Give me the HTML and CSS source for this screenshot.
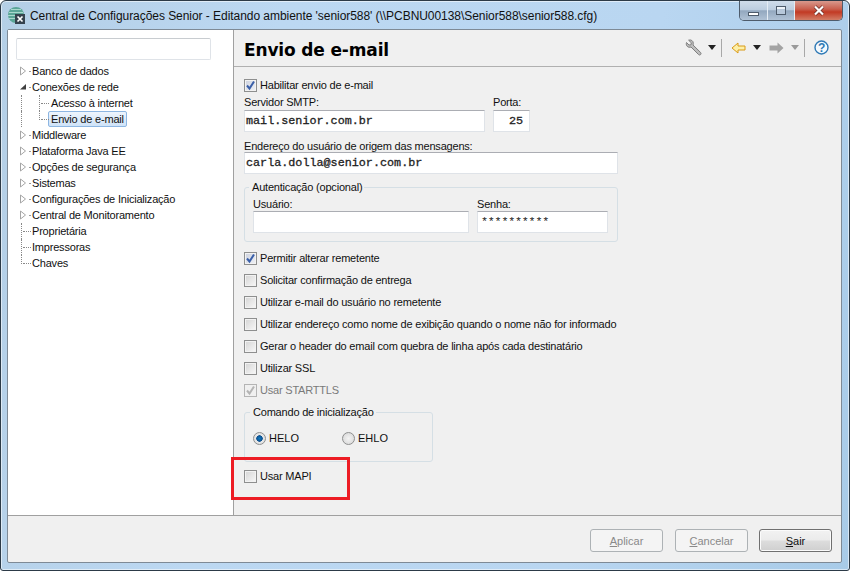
FILE: index.html
```html
<!DOCTYPE html>
<html lang="pt">
<head>
<meta charset="utf-8">
<title>Central de Configurações Senior</title>
<link rel="stylesheet" href="styles.css">
</head>
<body>
<div class="window">
  <header class="titlebar">
    <svg class="appicon" width="18" height="18" viewBox="0 0 18 18">
      <circle cx="8" cy="8" r="8" fill="#5aa596"/>
      <path d="M1 5.500h14M0 8.500h16M1 11.500h12M3 2.500h10" stroke="#a8d8cc" stroke-width="1"/>
      <rect x="7" y="7" width="10" height="10" fill="#35424d"/>
      <path d="M9.500 9.500l5 5M14.500 9.500l-5 5" stroke="#fff" stroke-width="1.700"/>
    </svg>
    <span class="title">Central de Configurações Senior - Editando ambiente 'senior588' (\\PCBNU00138\Senior588\senior588.cfg)</span>
    <div class="winbtns">
      <div class="winbtn min"><span class="minbar"></span></div>
      <div class="winbtn max"><span class="maxbox"></span></div>
      <div class="winbtn close">
        <svg width="14" height="11" viewBox="0 0 14 11"><path d="M3 1.500l8 8M11 1.500l-8 8" stroke="#6b2a22" stroke-width="3.600"/><path d="M3 1.500l8 8M11 1.500l-8 8" stroke="#fff" stroke-width="2.200"/></svg>
      </div>
    </div>
  </header>

  <div class="client">
    <div class="panes">
      <aside class="sidebar">
        <div class="search"></div>
        <ul class="tree">
          <li class="node"><svg class="arrow" width="8" height="10" viewBox="0 0 8 10"><path d="M1.500 1l5 4-5 4z" fill="#fff" stroke="#a6a6a6"/></svg><span class="dot"></span><span>Banco de dados</span></li>
          <li class="node"><svg class="arrow" width="8" height="10" viewBox="0 0 8 10"><path d="M1 7.500L7 2v5.500z" fill="#404040"/></svg><span class="dot"></span><span>Conexões de rede</span></li>
          <li class="node child"><span class="conn"></span><span>Acesso à internet</span></li>
          <li class="node child last"><span class="conn"></span><span class="selected">Envio de e-mail</span></li>
          <li class="node"><svg class="arrow" width="8" height="10" viewBox="0 0 8 10"><path d="M1.500 1l5 4-5 4z" fill="#fff" stroke="#a6a6a6"/></svg><span class="dot"></span><span>Middleware</span></li>
          <li class="node"><svg class="arrow" width="8" height="10" viewBox="0 0 8 10"><path d="M1.500 1l5 4-5 4z" fill="#fff" stroke="#a6a6a6"/></svg><span class="dot"></span><span>Plataforma Java EE</span></li>
          <li class="node"><svg class="arrow" width="8" height="10" viewBox="0 0 8 10"><path d="M1.500 1l5 4-5 4z" fill="#fff" stroke="#a6a6a6"/></svg><span class="dot"></span><span>Opções de segurança</span></li>
          <li class="node"><svg class="arrow" width="8" height="10" viewBox="0 0 8 10"><path d="M1.500 1l5 4-5 4z" fill="#fff" stroke="#a6a6a6"/></svg><span class="dot"></span><span>Sistemas</span></li>
          <li class="node"><svg class="arrow" width="8" height="10" viewBox="0 0 8 10"><path d="M1.500 1l5 4-5 4z" fill="#fff" stroke="#a6a6a6"/></svg><span class="dot"></span><span>Configurações de Inicialização</span></li>
          <li class="node"><svg class="arrow" width="8" height="10" viewBox="0 0 8 10"><path d="M1.500 1l5 4-5 4z" fill="#fff" stroke="#a6a6a6"/></svg><span class="dot"></span><span>Central de Monitoramento</span></li>
          <li class="node leaf"><span class="conn"></span><span>Proprietária</span></li>
          <li class="node leaf"><span class="conn"></span><span>Impressoras</span></li>
          <li class="node leaf last"><span class="conn"></span><span>Chaves</span></li>
        </ul>
      </aside>

      <main class="content">
        <div class="pagehead">
          <h1>Envio de e-mail</h1>
          <div class="tools">
            <svg class="wrench" width="17" height="17" viewBox="0 0 17 17"><path d="M1.500 3.500L4 6l2-.2.3-2L3.600 1.200C6 .3 8.400 1.800 8.300 4.400c0 .7-.1 1.100-.3 1.600l7.700 7.600c1.200 1.400-.8 3.300-2.100 2L6 8c-2.800 1-5.500-1-4.500-4.500z" fill="#bdbdbd" stroke="#7f7f7f"/></svg>
            <span class="caret"></span>
            <span class="sep"></span>
            <svg class="back" width="15" height="12" viewBox="0 0 15 12"><path d="M1 6l6-5v3h7v4H7v3z" fill="#fdf0a8" stroke="#d99a17"/></svg>
            <span class="caret"></span>
            <svg class="fwd" width="15" height="12" viewBox="0 0 15 12"><path d="M14.500 6L8.500.5v3H.5v5h8v3z" fill="#a3a3a3"/></svg>
            <span class="caret dim"></span>
            <span class="sep"></span>
            <svg class="help" width="15" height="15" viewBox="0 0 15 15"><circle cx="7.500" cy="7.500" r="6.500" fill="#f4f9fd" stroke="#2f79b5" stroke-width="1.400"/><text x="7.500" y="11.500" class="qmark" text-anchor="middle">?</text></svg>
          </div>
        </div>

        <form class="form">
          <label class="check first"><span class="box checked"><svg width="11" height="11" viewBox="0 0 11 11"><path d="M2 5.500l2.500 3L9 1.500" fill="none" stroke="#3a5fa8" stroke-width="2"/></svg></span>Habilitar envio de e-mail</label>
          <div class="fieldrow smtp">
            <div class="field"><span class="lbl">Servidor SMTP:</span><div class="input mono w241">mail.senior.com.br</div></div>
            <div class="field"><span class="lbl">Porta:</span><div class="input mono w37 right">25</div></div>
          </div>
          <div class="field origem"><span class="lbl">Endereço do usuário de origem das mensagens:</span><div class="input mono w374">carla.dolla@senior.com.br</div></div>

          <fieldset class="group auth">
            <legend>Autenticação (opcional)</legend>
            <div class="fieldrow authrow">
              <div class="field"><span class="lbl">Usuário:</span><div class="input w216"></div></div>
              <div class="field"><span class="lbl">Senha:</span><div class="input mono w131 pass">**********</div></div>
            </div>
          </fieldset>

          <div class="checks">
            <label class="check"><span class="box checked"><svg width="11" height="11" viewBox="0 0 11 11"><path d="M2 5.500l2.500 3L9 1.500" fill="none" stroke="#3a5fa8" stroke-width="2"/></svg></span>Permitir alterar remetente</label>
            <label class="check"><span class="box"></span>Solicitar confirmação de entrega</label>
            <label class="check"><span class="box"></span>Utilizar e-mail do usuário no remetente</label>
            <label class="check"><span class="box"></span>Utilizar endereço como nome de exibição quando o nome não for informado</label>
            <label class="check"><span class="box"></span>Gerar o header do email com quebra de linha após cada destinatário</label>
            <label class="check"><span class="box"></span>Utilizar SSL</label>
            <label class="check disabled"><span class="box off"><svg width="11" height="11" viewBox="0 0 11 11"><path d="M2 5.500l2.500 3L9 1.500" fill="none" stroke="#b4b4b4" stroke-width="2"/></svg></span>Usar STARTTLS</label>
          </div>

          <fieldset class="group init">
            <legend>Comando de inicialização</legend>
            <div class="radios">
              <label class="radio"><span class="dotbox on"></span>HELO</label>
              <label class="radio"><span class="dotbox"></span>EHLO</label>
            </div>
          </fieldset>

          <label class="check mapi"><span class="box"></span>Usar MAPI</label>
          <div class="redmark"></div>
        </form>
      </main>
    </div>

    <footer class="actions">
      <button class="btn" type="button" disabled><u>A</u>plicar</button>
      <button class="btn" type="button" disabled><u>C</u>ancelar</button>
      <button class="btn primary" type="button"><u>S</u>air</button>
    </footer>
  </div>
</div>
</body>
</html>
```
FILE: styles.css
```css
* { box-sizing: border-box; }
html, body { margin: 0; padding: 0; }
body {
  width: 850px;
  height: 571px;
  overflow: hidden;
  font-family: "Liberation Sans", Arial, sans-serif;
  font-size: 11px;
  letter-spacing: -0.2px;
  color: #000;
}
.window {
  width: 850px;
  height: 571px;
  display: flex;
  flex-direction: column;
  padding: 0 7px 7px 6px;
  border: 1px solid #2c3a47;
  border-radius: 6px 6px 3px 3px;
  box-shadow: inset 0 0 0 1px rgba(255, 255, 255, 0.55);
  background: linear-gradient(100deg, #b4cfe6 0, #bcd8f2 30%, #b9d6f1 70%, #a8cbe8 100%);
}
.titlebar {
  height: 28px;
  flex: none;
  display: flex;
  align-items: flex-start;
  margin: 0 -1px;
  padding-top: 6px;
}
.appicon { margin: 0 4px 0 2px; flex: none; }
.title {
  font-size: 12px;
  letter-spacing: -0.05px;
  line-height: 18px;
  white-space: nowrap;
  color: #111;
}
.winbtns {
  display: flex;
  margin: -6px 0 0 auto;
  height: 20px;
  border: 1px solid #4e5c6c;
  border-top: 0;
  border-radius: 0 0 5px 5px;
  overflow: hidden;
}
.winbtn {
  height: 19px;
  display: flex;
  align-items: center;
  justify-content: center;
  border-right: 1px solid #e4ecf4;
}
.min { width: 28px; }
.max { width: 27px; }
.min, .max {
  background: linear-gradient(#cfdcea 0, #bccddf 45%, #93a8bf 52%, #b0c2d5 100%);
}
.close {
  width: 47px;
  border-right: 0;
  background: linear-gradient(#d8998d 0, #c9604f 42%, #c23a24 58%, #d27d66 100%);
}
.minbar { width: 11px; height: 4px; margin-top: 7px; background: #fff; border: 1px solid #4e5c6c; }
.maxbox { width: 10px; height: 9px; border: 1px solid #4e5c6c; background: #b7c8da; box-shadow: inset 0 2px 0 #eef3f8; }

.client {
  flex: 1;
  min-height: 0;
  display: flex;
  flex-direction: column;
  background: #f0f0f0;
  border: 1px solid #7e8a96;
  border-radius: 2px;
}
.panes { flex: 1; min-height: 0; display: flex; border-bottom: 1px solid #a0a0a0; }

.sidebar {
  width: 226px;
  flex: none;
  background: #fff;
  border-right: 1px solid #a0a0a0;
  padding: 8px 0 0 8px;
}
.search {
  width: 195px;
  height: 22px;
  background: #fff;
  border: 1px solid #dfe3e8;
  border-top-color: #c8ccd0;
  border-radius: 2px;
}
.tree { list-style: none; margin: 3px 0 0; padding: 0; }
.node {
  position: relative;
  height: 16px;
  display: flex;
  align-items: center;
  white-space: nowrap;
  line-height: 16px;
  color: #111;
}
.arrow { margin: 0 2px 0 3px; flex: none; }
.dot { width: 2px; height: 1px; margin-right: 1px; background: #999; flex: none; }
.child { padding-left: 23px; }
.child::before {
  content: "";
  position: absolute;
  left: 5px;
  top: 0;
  bottom: 0;
  border-left: 1px dotted #888;
}
.leaf { padding-left: 5px; }
.conn {
  width: 11px;
  flex: none;
  height: 16px;
  border-left: 1px dotted #888;
  position: relative;
}
.child .conn { width: 12px; }
.conn::after {
  content: "";
  position: absolute;
  left: 1px;
  top: 8px;
  width: 8px;
  border-top: 1px dotted #888;
}
.last .conn { height: 9px; align-self: flex-start; }
.selected {
  display: block;
  margin-left: -3px;
  padding: 0 2px 0 2px;
  height: 16px;
  line-height: 15px;
  background: linear-gradient(#eef5fd, #cfe3f8);
  border: 1px solid #8db6e2;
  border-radius: 2px;
}

.content { flex: 1; min-width: 0; display: flex; flex-direction: column; }
.pagehead {
  height: 37px;
  flex: none;
  display: flex;
  align-items: center;
  justify-content: space-between;
  padding: 3px 12px 0 10px;
  border-bottom: 1px solid #b0b0b0;
}
h1 {
  margin: 0;
  font-family: "DejaVu Sans", sans-serif;
  font-size: 17px;
  font-weight: 700;
  letter-spacing: -0.15px;
  color: #000;
}
.tools { display: flex; align-items: center; margin-top: -4px; }
.caret { width: 8px; height: 5px; background: #222; clip-path: polygon(0 0, 100% 0, 50% 100%); margin: 0 0 0 6px; }
.caret.dim { background: #9a9a9a; margin-left: 7px; }
.sep { width: 1px; height: 18px; background: #a8a8a8; margin: 0 9px 0 5px; }
.back + .caret { margin-left: 7px; }
.fwd { margin-left: 8px; }
.qmark { font: 700 12px "Liberation Sans", sans-serif; fill: #2f79b5; }

.form { position: relative; flex: 1; padding: 0 10px; }
.check {
  display: flex;
  align-items: center;
  height: 16px;
  white-space: nowrap;
  color: #111;
}
.box {
  width: 13px;
  height: 13px;
  flex: none;
  margin-right: 3px;
  display: flex;
  align-items: center;
  justify-content: center;
  background: linear-gradient(135deg, #d4d4d4, #f8f8f8);
  border: 1px solid #8e8f8f;
  box-shadow: inset 0 0 0 1px #f2f2f2;
}
.box.checked { background: linear-gradient(135deg, #ccd1de, #f0f2f6); }
.box.off { background: #f0f0f0; border-color: #b4b4b4; box-shadow: none; }
.disabled { color: #7a7a7a; }
.first { margin-top: 10px; }
.fieldrow { display: flex; }
.smtp { gap: 8px; margin-top: 2px; }
.field { display: flex; flex-direction: column; }
.lbl { height: 13px; line-height: 14px; color: #111; white-space: nowrap; }
.input {
  height: 22px;
  margin-top: 2px;
  padding: 0 1px;
  background: #fff;
  border: 1px solid #dfe3e8;
  border-top-color: #abadb3;
  line-height: 20px;
  letter-spacing: 0;
  white-space: nowrap;
}
.mono {
  font-family: "Liberation Mono", monospace;
  font-size: 11.75px;
  color: #222;
  -webkit-text-stroke: 0.3px #222;
}
.w241 { width: 241px; }
.w37 { width: 37px; }
.w374 { width: 374px; }
.w216 { width: 216px; }
.w131 { width: 131px; }
.right { text-align: right; padding-right: 6px; }
.origem { margin-top: 7px; }
.origem .input { margin-top: 0; }
.authrow .input { margin-top: 1px; }
.pass { padding-left: 3px; letter-spacing: -0.25px; -webkit-text-stroke: 0; }
.group {
  margin: 0;
  padding: 0;
  background: transparent;
  border: 1px solid #d5dfe5;
  border-radius: 3px;
}
.group legend { margin-left: 5px; padding: 0 2px 0 3px; line-height: 14px; color: #111; }
.auth { width: 374px; height: 62px; margin-top: 6px; padding: 0 8px; }
.auth legend { margin-left: -4px; }
.authrow { gap: 8px; margin-top: 3px; }
.checks { margin-top: 8px; display: flex; flex-direction: column; gap: 6px; }
.init { width: 189px; height: 57px; margin-top: 7px; }
.radios { display: flex; padding: 11px 0 0 8px; }
.radio { width: 89px; display: flex; align-items: center; height: 16px; color: #111; letter-spacing: 0; }
.dotbox {
  width: 13px;
  height: 13px;
  margin-right: 3px;
  flex: none;
  border-radius: 50%;
  border: 1px solid #8e8f8f;
  background: radial-gradient(circle, #f4f4f4 0, #d4d4d4 100%);
}
.dotbox.on { background: radial-gradient(circle, #0f7ac0 0, #0d4f8f 38%, #e8e8e8 45%, #d8d8d8 100%); }
.mapi { margin-top: 6px; }
.redmark {
  position: absolute;
  left: -3px;
  top: 390px;
  width: 119px;
  height: 43px;
  border: 3px solid #ed1c24;
  pointer-events: none;
}

.actions {
  height: 46px;
  flex: none;
  display: flex;
  justify-content: flex-end;
  align-items: flex-start;
  gap: 12px;
  padding: 13px 9px 0 0;
}
.btn {
  width: 73px;
  height: 23px;
  padding: 0;
  font: 11px "Liberation Sans", Arial, sans-serif;
  color: #111;
  background: linear-gradient(#f2f2f2 0, #ebebeb 48%, #dddddd 52%, #cfcfcf 100%);
  border: 1px solid #707070;
  border-radius: 3px;
  box-shadow: inset 0 0 0 1px #fbfbfb;
}
.primary { margin-left: -1px; }
.btn:disabled {
  color: #8a8a8a;
  background: #f4f4f4;
  border-color: #adb2b5;
  box-shadow: none;
}
```
